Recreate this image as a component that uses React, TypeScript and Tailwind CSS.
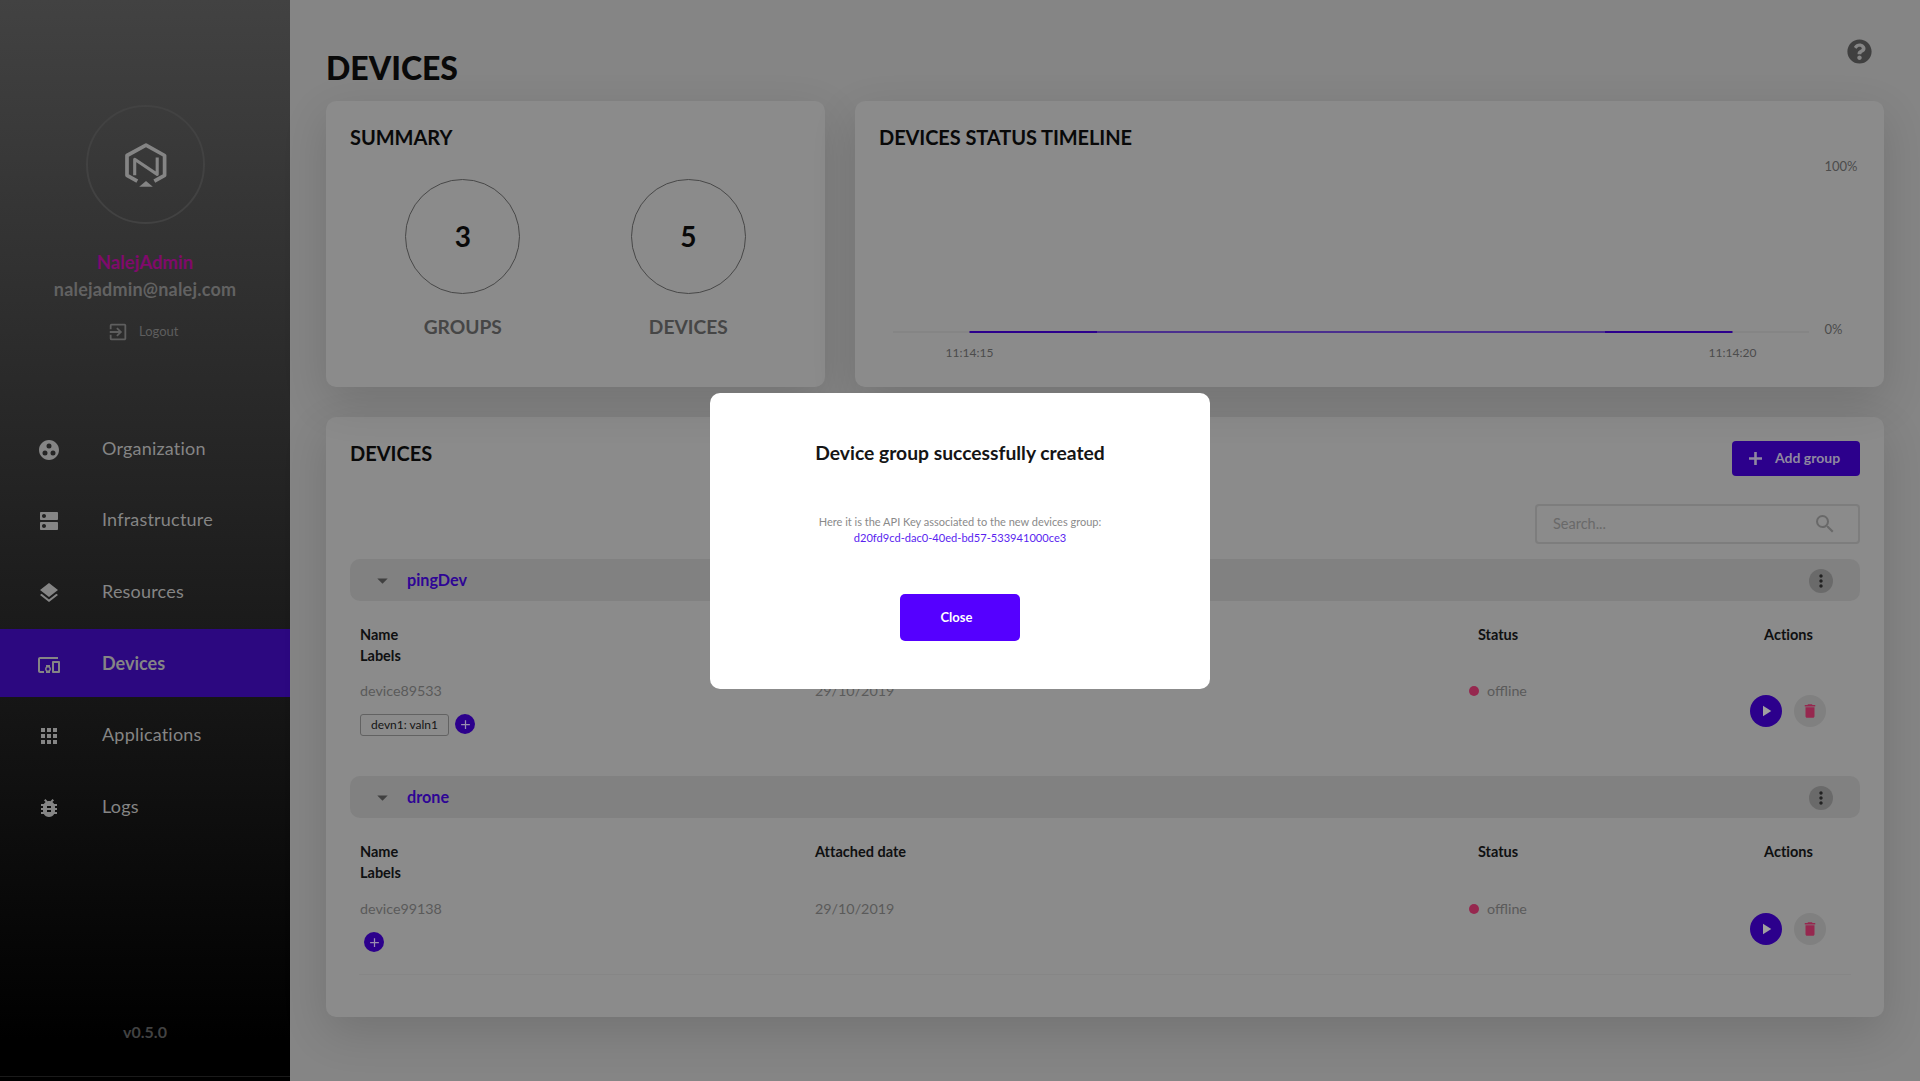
import React from "react";
import {
  MdAdd,
  MdApps,
  MdArrowDropDown,
  MdBugReport,
  MdDelete,
  MdDevicesOther,
  MdDns,
  MdExitToApp,
  MdGroupWork,
  MdLayers,
  MdMoreVert,
  MdPlayArrow,
  MdSearch,
} from "react-icons/md";
import { FaQuestionCircle } from "react-icons/fa";
import type { IconType } from "react-icons";

const navItems: { label: string; icon: IconType; active?: boolean }[] = [
  { label: "Organization", icon: MdGroupWork },
  { label: "Infrastructure", icon: MdDns },
  { label: "Resources", icon: MdLayers },
  { label: "Devices", icon: MdDevicesOther, active: true },
  { label: "Applications", icon: MdApps },
  { label: "Logs", icon: MdBugReport },
];

const groups = [
  { name: "pingDev", device: "device89533", date: "29/10/2019", label: "devn1: valn1" },
  { name: "drone", device: "device99138", date: "29/10/2019", label: null },
];

function Logo() {
  return (
    <svg width="42" height="44" viewBox="0 0 42 44" fill="none" stroke="#858585" className="mt-px">
      <path d="M12.3 38.2 2 32.3V12.5L21 2.2l18.6 10.3v19.8l-10.3 5.9" strokeWidth="3.7" strokeLinejoin="round" />
      <path d="M9.7 32.3V16.3L32.2 31.4V14.6" strokeWidth="3.1" strokeLinejoin="round" />
      <path d="M14.2 43.8 21 38l6.8 5.8z" fill="#858585" stroke="none" />
    </svg>
  );
}

function Sidebar() {
  return (
    <aside className="flex h-[1081px] w-[290px] shrink-0 flex-col bg-black">
      <div className="flex h-[1077px] flex-col border-b border-[#1a1a1a] bg-[linear-gradient(180deg,#424242_0px,#000000_1040px)] pt-[105px]">
        <div className="ml-[86px] flex h-[119px] w-[119px] items-center justify-center rounded-full border-2 border-[#424242]">
          <Logo />
        </div>
        <div className="mt-[25px] text-center text-[18.5px] leading-[26px] font-bold text-[#800a6c]">NalejAdmin</div>
        <div className="mt-px text-center text-[18px] leading-[26px] font-bold tracking-[0.2px] text-[#626262]">nalejadmin@nalej.com</div>
        <div className="mt-[19px] flex h-[22px] items-center gap-[10px] pl-[107px] text-[13px] text-[#5e5e5e]">
          <MdExitToApp size={22} />
          <span>Logout</span>
        </div>
        <nav className="mt-[71.3px] flex flex-col gap-[3.67px]">
          {navItems.map(({ label, icon: Icon, active }) => (
            <a
              key={label}
              className={
                active
                  ? "flex h-[68px] items-center bg-[#2c0880] pl-[37px] text-[18px] font-bold text-[#858585]"
                  : "flex h-[68px] items-center pl-[37px] text-[18px] tracking-[0.2px] text-[#858585]"
              }
            >
              <Icon size={24} className="mt-[3px] mr-[41px] text-[#858585]" />
              {label}
            </a>
          ))}
        </nav>
        <div className="mt-auto mb-[32px] text-center text-base leading-6 font-bold text-[#424242]">v0.5.0</div>
      </div>
    </aside>
  );
}

function Stat({ value, label }: { value: number; label: string }) {
  return (
    <div className="flex w-[226px] flex-col items-center">
      <div className="flex h-[115px] w-[115px] items-center justify-center rounded-full border border-[#484848] pb-[2px] text-[28px] font-bold">
        {value}
      </div>
      <div className="mt-5 text-[19.2px] leading-[25px] font-bold text-[#464646]">{label}</div>
    </div>
  );
}

function TimelineChart() {
  return (
    <svg width="981" height="214" viewBox="0 0 981 214" fontSize="12" fill="#4c4c4c">
      <rect x="14" y="182" width="916" height="2" fill="#858585" />
      <rect x="90.5" y="182" width="127.5" height="2" fill="#2c008c" />
      <rect x="218" y="182" width="508" height="2" fill="#4a2f8e" />
      <rect x="726" y="182" width="127.5" height="2" fill="#2c008c" />
      <text x="90.5" y="208" textAnchor="middle">11:14:15</text>
      <text x="853.5" y="208" textAnchor="middle">11:14:20</text>
      <text x="945.5" y="22" fontSize="13">100%</text>
      <text x="945.5" y="185" fontSize="13">0%</text>
    </svg>
  );
}

const card = "rounded-[10px] bg-[#8b8b8b] p-6 shadow-[0_15px_45px_rgba(0,0,0,0.14)]";

function Group({ name, device, date, label }: (typeof groups)[number]) {
  return (
    <section>
      <div className="flex h-[42px] items-center rounded-[10px] bg-[#818181] pr-[27px] pl-5">
        <MdArrowDropDown size={25} className="text-[#404040]" />
        <span className="ml-3 text-[16.2px] leading-5 font-bold text-[#2e0595]">{name}</span>
        <button className="mt-px ml-auto flex h-6 w-6 items-center justify-center rounded-full bg-[#6a6a6a]">
          <MdMoreVert size={20} className="text-[#222]" />
        </button>
      </div>
      <div className="mt-[23px] grid grid-cols-[455px_455px_456px_124px] px-[10px] text-[14.5px] leading-[21px] font-bold text-[#0f1011]">
        <div>
          <div>Name</div>
          <div>Labels</div>
        </div>
        <div>Attached date</div>
        <div className="text-center">Status</div>
        <div className="pl-px text-center">Actions</div>
      </div>
      <div
        className={
          label
            ? "mt-[15px] grid h-[76px] grid-cols-[455px_455px_456px_124px] px-[10px] text-[14.3px] leading-5 text-[#5a5a5a]"
            : "mt-[16px] grid h-[75px] grid-cols-[455px_455px_456px_124px] px-[10px] text-[14.3px] leading-5 text-[#5a5a5a]"
        }
      >
        <div>
          <div>{device}</div>
          <div className="mt-[13px] flex items-start">
            {label && (
              <span className="mr-[6px] flex h-[22px] w-[89px] items-center justify-center rounded-[3px] border border-[#626262] text-[12px] text-[#151515]">
                {label}
              </span>
            )}
            <button
              className={
                label
                  ? "flex h-5 w-5 items-center justify-center rounded-full bg-[#2c008c]"
                  : "ml-1 flex h-5 w-5 items-center justify-center rounded-full bg-[#2c008c]"
              }
            >
              <MdAdd size={15} className="text-[#9a8fb0]" />
            </button>
          </div>
        </div>
        <div>{date}</div>
        <div className="flex h-5 items-center justify-center gap-2 [font-variant-ligatures:normal]">
          <span className="h-[10px] w-[10px] rounded-full bg-[#96284f]" />
          <span>offline</span>
        </div>
        <div className="mt-[14px] flex justify-center gap-3">
          <button className="flex h-8 w-8 items-center justify-center rounded-full bg-[#2c008c]">
            <MdPlayArrow size={18} className="text-[#a0a0a0]" />
          </button>
          <button className="flex h-8 w-8 items-center justify-center rounded-full bg-[#808080]">
            <MdDelete size={18} className="text-[#96284f]" />
          </button>
        </div>
      </div>
    </section>
  );
}

function Dialog() {
  return (
    <div className="fixed inset-0 flex items-center justify-center">
      <div className="flex h-[296px] w-[500px] flex-col items-center rounded-[10px] bg-white pt-[48px]">
        <h3 className="text-[19.3px] leading-6 font-bold text-[#151515]">Device group successfully created</h3>
        <p className="mt-[49px] text-center text-[11px] leading-4 text-[#8a8a8a]">
          Here it is the API Key associated to the new devices group:
          <br />
          <span className="text-[11.1px] text-[#5a1ff0]">d20fd9cd-dac0-40ed-bd57-533941000ce3</span>
        </p>
        <button className="mt-12 h-[47px] w-[120px] rounded-[5px] bg-[#5500ff] pt-px pr-[7px] text-[13px] font-bold text-white">
          Close
        </button>
      </div>
    </div>
  );
}

export default function App() {
  return (
    <div className="flex h-[1081px] w-[1920px] overflow-hidden bg-[#858585] font-['Lato',sans-serif] text-[#090909] [font-variant-ligatures:none]">
      <Sidebar />
      <main className="flex-1 px-9">
        <header className="flex h-[101px] justify-between pt-[48px]">
          <h1 className="text-[32px] leading-10 font-black">DEVICES</h1>
          <FaQuestionCircle size={25} className="-mt-[9px] mr-[12px] text-[#404040]" />
        </header>
        <div className="flex gap-[30px]">
          <section className={`${card} h-[286px] w-[499px]`}>
            <h2 className="text-xl leading-6 font-bold tracking-[-0.05px]">SUMMARY</h2>
            <div className="mt-[30px] flex justify-center">
              <Stat value={3} label="GROUPS" />
              <Stat value={5} label="DEVICES" />
            </div>
          </section>
          <section className={`${card} h-[286px] flex-1`}>
            <h2 className="text-xl leading-6 font-bold tracking-[-0.08px]">DEVICES STATUS TIMELINE</h2>
            <TimelineChart />
          </section>
        </div>
        <section className={`${card} mt-[30px] h-[600px]`}>
          <div className="flex h-[35px] justify-between">
            <h2 className="text-xl leading-6 font-bold">DEVICES</h2>
            <button className="flex w-32 items-center rounded-[4px] bg-[#2c008c] pb-[2px] pl-[17px] text-[14px] font-bold text-[#8f88a0]">
              <svg width="13" height="13" viewBox="0 0 13 13" stroke="currentColor" strokeWidth="2.6" className="mt-px mr-[13px]">
                <path d="M6.5 0v13M0 6.5h13" />
              </svg>
              Add group
            </button>
          </div>
          <div className="mt-7 mb-[15px] ml-auto flex h-10 w-[325px] items-center justify-between rounded-[4px] border-2 border-[#7d7d7d] pr-[21px] pl-4 text-[14.5px] text-[#696969]">
            <span>Search...</span>
            <MdSearch size={24} />
          </div>
          <div className="flex flex-col gap-[19px]">
            {groups.map((g) => (
              <Group key={g.name} {...g} />
            ))}
          </div>
          <hr className="mr-[9px] ml-[9px] border-[#868686]" />
        </section>
      </main>
      <Dialog />
    </div>
  );
}
